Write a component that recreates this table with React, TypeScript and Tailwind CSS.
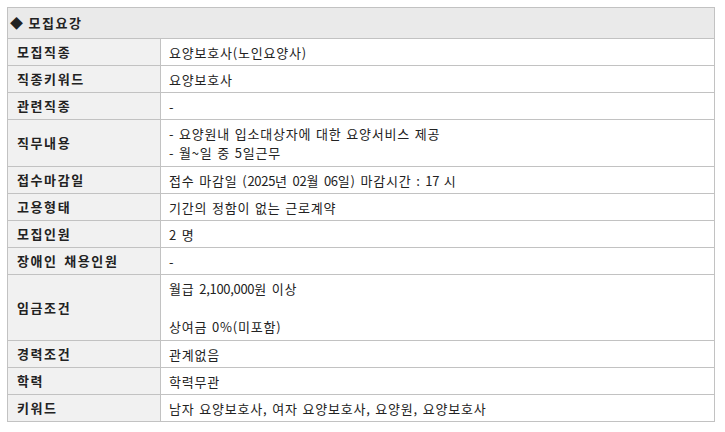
import React from "react";

type Row = { label: string; lines: React.ReactNode[]; h: string };

const N = ({ children }: { children: React.ReactNode }) => (
  <span className="tracking-[-0.3px]">{children}</span>
);

const rows: Row[] = [
  { label: "모집직종", lines: ["요양보호사(노인요양사)"], h: "h-[27px]" },
  { label: "직종키워드", lines: ["요양보호사"], h: "h-[27px]" },
  { label: "관련직종", lines: ["-"], h: "h-[27px]" },
  {
    label: "직무내용",
    lines: ["- 요양원내 입소대상자에 대한 요양서비스 제공", "- 월~일 중 5일근무"],
    h: "h-[47px]",
  },
  {
    label: "접수마감일",
    lines: [
      <>
        접수 마감일 (<N>2025</N>년 <N>02</N>월 <N>06</N>일) 마감시간 : <N>17</N> 시
      </>,
    ],
    h: "h-[27px]",
  },
  { label: "고용형태", lines: ["기간의 정함이 없는 근로계약"], h: "h-[27px]" },
  { label: "모집인원", lines: ["2 명"], h: "h-[27px]" },
  { label: "장애인 채용인원", lines: ["-"], h: "h-[27px]" },
  {
    label: "임금조건",
    lines: [
      <>
        월급 <N>2,100,000</N>원 이상
      </>,
      "\u00a0",
      "상여금 0%(미포함)",
    ],
    h: "h-[66px]",
  },
  { label: "경력조건", lines: ["관계없음"], h: "h-[27px]" },
  { label: "학력", lines: ["학력무관"], h: "h-[27px]" },
  { label: "키워드", lines: ["남자 요양보호사, 여자 요양보호사, 요양원, 요양보호사"], h: "h-[26px]" },
];

export default function App() {
  return (
    <div
      className="w-[725px] h-[432px] bg-white pt-[7px] pl-[7px]"
      style={{ fontFamily: '"Noto Sans CJK KR", "Noto Sans", sans-serif' }}
    >
      <div className="w-[708px] border border-[#c2c2c2] text-[13px] text-[#222]">
        <div className="h-[31px] bg-[#eaeaea] border-b border-[#c2c2c2] flex items-center pl-[2px] font-bold tracking-[1.5px]">
          <span className="text-[13px] mr-[4px]">◆</span>
          <span>모집요강</span>
        </div>
        {rows.map((r, i) => (
          <div
            key={i}
            className={`flex ${r.h} ${i < rows.length - 1 ? "border-b border-[#c2c2c2]" : ""}`}
          >
            <div className="w-[153px] shrink-0 bg-[#f1f1f1] border-r border-[#c2c2c2] flex items-center pl-[9px] font-bold tracking-[1.6px] [word-spacing:2px]">
              {r.label}
            </div>
            <div className="flex-1 flex flex-col justify-center pl-[8px] leading-[19px] tracking-[0.8px] [word-spacing:1px]">
              {r.lines.map((l, j) => (
                <div key={j}>{l}</div>
              ))}
            </div>
          </div>
        ))}
      </div>
    </div>
  );
}
